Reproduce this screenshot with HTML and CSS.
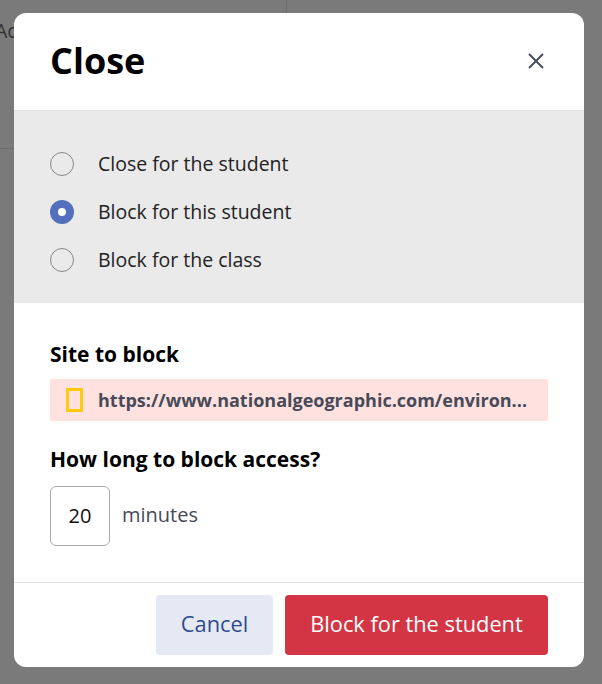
FILE: index.html
```html
<!DOCTYPE html>
<html lang="en">
<head>
<meta charset="utf-8">
<title>Close</title>
<link rel="stylesheet" href="styles.css">
</head>
<body>
<div class="page">
  <div class="page-top">
    <div class="page-cell"><span class="page-text">Ac</span></div>
  </div>
</div>
<div class="overlay">
  <div class="modal">
    <header class="modal-head">
      <h1 class="modal-title">Close</h1>
      <button class="close-btn" aria-label="Close">
        <svg width="16" height="16" viewBox="0 0 16 16"><path d="M1 1 15 15M15 1 1 15" fill="none" stroke="#474a59" stroke-width="1.9"/></svg>
      </button>
    </header>
    <section class="options">
      <label class="option"><span class="radio"></span><span class="option-label">Close for the student</span></label>
      <label class="option"><span class="radio radio-on"></span><span class="option-label">Block for this student</span></label>
      <label class="option"><span class="radio"></span><span class="option-label">Block for the class</span></label>
    </section>
    <section class="details">
      <h2 class="field-title">Site to block</h2>
      <div class="site">
        <span class="site-logo"></span>
        <span class="site-url">https://www.nationalgeographic.com/environ...</span>
      </div>
      <h2 class="field-title field-second">How long to block access?</h2>
      <div class="duration">
        <div class="number">20</div>
        <span class="unit">minutes</span>
      </div>
    </section>
    <footer class="modal-foot">
      <button class="btn btn-cancel">Cancel</button>
      <button class="btn btn-block">Block for the student</button>
    </footer>
  </div>
</div>
</body>
</html>
```
FILE: styles.css
```css
* { box-sizing: border-box; }
html, body { margin: 0; height: 100%; }
body {
  background: #7a7a7a;
  font-family: "Open Sans", sans-serif;
  color: #1f1f1f;
  overflow: hidden;
}
.page-top {
  width: 287px;
  height: 149px;
  border-right: 1px solid #6e6e6e;
  border-bottom: 1px solid #6e6e6e;
}
.page-cell { padding-top: 19px; margin-left: -5px; }
.page-text { font-size: 19.5px; line-height: 24px; color: #333; }
.overlay { position: absolute; top: 13px; left: 14px; }
.modal {
  width: 570px;
  height: 654px;
  background: #fff;
  border-radius: 12px;
  overflow: hidden;
  display: flex;
  flex-direction: column;
}
.modal-head {
  height: 98px;
  flex: none;
  border-bottom: 1px solid #e2e2e2;
  display: flex;
  align-items: center;
  justify-content: space-between;
  padding: 0 40px 2px 36px;
}
.modal-title { margin: 0; font-size: 36px; line-height: 46px; font-weight: 700; color: #000; }
.close-btn { width: 16px; height: 16px; padding: 0; border: 0; background: none; display: flex; }
.options {
  height: 192px;
  flex: none;
  background: #eaeaea;
  padding: 29px 36px 0;
  display: flex;
  flex-direction: column;
}
.option { height: 48px; display: flex; align-items: center; gap: 24px; font-size: 19.5px; color: #222; }
.option-label { padding-bottom: 2px; }
.radio {
  width: 24px;
  height: 24px;
  flex: none;
  border-radius: 50%;
  border: 1px solid #85858d;
}
.radio-on { border: 8px solid #5270bd; background: #fff; }
.details { flex: 1; padding: 37px 36px 0; }
.field-title { margin: 0; font-size: 21px; line-height: 28px; font-weight: 700; color: #000; }
.field-second { margin-top: 24px; }
.site {
  margin-top: 11px;
  height: 42px;
  background: #ffe2df;
  display: flex;
  align-items: center;
  padding: 0 15px 0 16px;
  gap: 15px;
}
.site-logo { width: 17px; height: 24px; flex: none; border: 3px solid #ffc90e; }
.site-url { font-size: 18px; font-weight: 700; color: #474a59; white-space: nowrap; }
.duration { margin-top: 13px; display: flex; align-items: center; gap: 12px; }
.number {
  width: 60px;
  height: 60px;
  border: 1px solid #aaa;
  border-radius: 6px;
  display: flex;
  align-items: center;
  justify-content: center;
  padding-bottom: 2px;
  font-size: 20px;
  color: #111;
}
.unit { font-size: 20px; line-height: 28px; padding-bottom: 3px; color: #474a59; }
.modal-foot {
  height: 85px;
  flex: none;
  border-top: 1px solid #e2e2e2;
  padding: 12px 36px 0 0;
  display: flex;
  justify-content: flex-end;
  gap: 12px;
}
.btn {
  height: 60px;
  border: 0;
  border-radius: 4px;
  font-family: inherit;
  font-size: 21.8px;
  font-weight: 500;
  line-height: 58px;
  padding: 0 0 2px;
}
.btn-cancel { width: 117px; background: #e5e9f3; color: #30498f; }
.btn-block { width: 263px; background: #d43545; color: #fff; }
```
